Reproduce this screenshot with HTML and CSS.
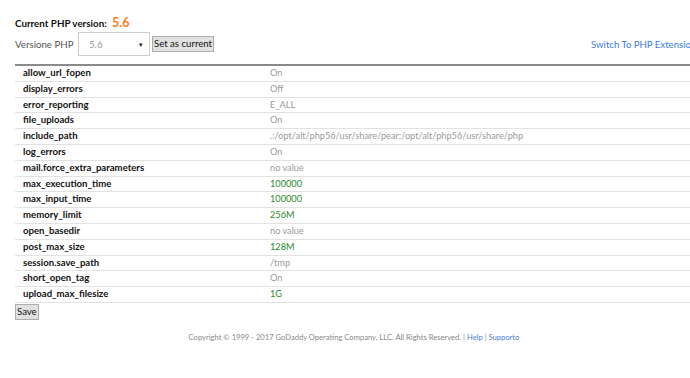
FILE: index.html
```html
<!DOCTYPE html>
<html lang="en">

<head>
  <meta charset="UTF-8">
  <title>PHP Version Selector</title>
  <link rel="stylesheet" href="styles.css">
</head>

<body>
  <div class="page">
    <div class="current">Current PHP version: <span class="version">5.6</span></div>

    <div class="toolbar">
      <div class="picker">
        <label for="version">Versione PHP</label>
        <div class="select">
          <span>5.6</span>
          <span class="arrow">&#9662;</span>
        </div>
        <button type="button" class="btn">Set as current</button>
      </div>
      <a href="#" class="switch">Switch To PHP Extensions</a>
    </div>

    <table class="options">
      <tr><td class="name">allow_url_fopen</td><td class="val">On</td></tr>
      <tr><td class="name">display_errors</td><td class="val">Off</td></tr>
      <tr><td class="name">error_reporting</td><td class="val">E_ALL</td></tr>
      <tr><td class="name">file_uploads</td><td class="val">On</td></tr>
      <tr><td class="name">include_path</td><td class="val">.:/opt/alt/php56/usr/share/pear:/opt/alt/php56/usr/share/php</td></tr>
      <tr><td class="name">log_errors</td><td class="val">On</td></tr>
      <tr><td class="name">mail.force_extra_parameters</td><td class="val">no value</td></tr>
      <tr><td class="name">max_execution_time</td><td class="val set">100000</td></tr>
      <tr><td class="name">max_input_time</td><td class="val set">100000</td></tr>
      <tr><td class="name">memory_limit</td><td class="val set">256M</td></tr>
      <tr><td class="name">open_basedir</td><td class="val">no value</td></tr>
      <tr><td class="name">post_max_size</td><td class="val set">128M</td></tr>
      <tr><td class="name">session.save_path</td><td class="val">/tmp</td></tr>
      <tr><td class="name">short_open_tag</td><td class="val">On</td></tr>
      <tr><td class="name">upload_max_filesize</td><td class="val set">1G</td></tr>
    </table>

    <button type="button" class="btn save">Save</button>

    <div class="footer">
      Copyright &copy; 1999 - 2017 GoDaddy Operating Company, LLC. All Rights Reserved. |
      <a href="#">Help</a> | <a href="#">Supporto</a>
    </div>
  </div>
</body>

</html>
```

FILE: styles.css
```css
body {
  margin: 0;
  font-family: Lato, Arial, sans-serif;
  font-size: 9.5px;
  color: #333;
  background: #fff;
  overflow: hidden;
}

.page {
  padding: 15px 0 0 15px;
  width: 720px;
}

.current {
  font-weight: bold;
  font-size: 9.8px;
  color: #111;
}

.version {
  color: #f77a1c;
  font-size: 12.5px;
  margin-left: 3px;
}

.toolbar {
  display: flex;
  align-items: center;
  margin-top: 2px;
  padding-bottom: 8px;
  border-bottom: 2px solid #8a8a8a;
}

.picker {
  display: flex;
  align-items: center;
}

.picker label {
  font-size: 9.7px;
  color: #555;
  width: 63px;
  white-space: nowrap;
}

.select {
  display: flex;
  align-items: center;
  justify-content: space-between;
  padding: 0 6px 0 10px;
  box-sizing: border-box;
  width: 72px;
  height: 24px;
  border: 1px solid #ccc;
  color: #999;
  font-size: 9.7px;
}

.arrow {
  color: #222;
  font-size: 7px;
}

.btn {
  font-family: Lato, Arial, sans-serif;
  font-size: 9.6px;
  color: #111;
  background: #e1e1e1;
  border: 1px solid #adadad;
  padding: 0 1px;
  height: 16px;
  line-height: 14px;
  margin-left: 2px;
}

.switch {
  color: #3a7be0;
  text-decoration: none;
  font-size: 9.6px;
  white-space: nowrap;
  margin-left: 377px;
}

.options {
  border-collapse: collapse;
  width: 700px;
}

.options td {
  border-bottom: 1px solid #e2e2e2;
  height: 14.8px;
  padding: 0;
  line-height: 14.8px;
}

.name {
  font-weight: bold;
  font-size: 9.6px;
  color: #111;
  padding-left: 8px !important;
  width: 247px;
}

.val {
  color: #9a9a9a;
  font-size: 9.2px;
}

.val.set {
  color: #2b8a2b;
}

.save {
  margin: 1px 0 0 0;
  height: 16px;
}

.footer {
  margin-top: 12px;
  text-align: center;
  font-size: 7.6px;
  color: #888;
  width: 678px;
}

.footer a {
  color: #4a80d8;
  text-decoration: none;
}
```
